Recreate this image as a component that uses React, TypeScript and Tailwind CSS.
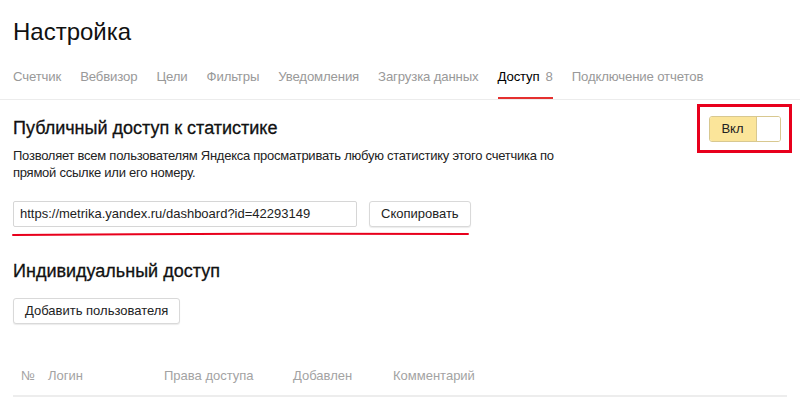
import React from "react";

const tabs = [
  "Счетчик",
  "Вебвизор",
  "Цели",
  "Фильтры",
  "Уведомления",
  "Загрузка данных",
];

const columns = [
  { label: "№", w: "w-[27px]" },
  { label: "Логин", w: "w-[116px]" },
  { label: "Права доступа", w: "w-[129px]" },
  { label: "Добавлен", w: "w-[100px]" },
  { label: "Комментарий", w: "w-[120px]" },
];

export default function App() {
  return (
    <div className="w-[800px] h-[401px] bg-white overflow-hidden text-[#000] font-['Liberation_Sans',Arial,sans-serif]">
      {/* Header */}
      <div className="px-[13px] pt-[17px]">
        <h1 className="text-[24px] leading-[30px] text-[#111]">Настройка</h1>
      </div>

      {/* Tabs */}
      <div className="mt-[19px] border-b border-[#ececec] px-[13px] flex gap-[19px] text-[13.2px] tracking-[-0.15px]">
        {tabs.map((t) => (
          <div key={t} className="h-[33px] pt-[1px] text-[#999]">
            {t}
          </div>
        ))}
        <div className="h-[33px] pt-[1px] border-b-2 border-[#e5302f] -mb-px">
          <span className="text-[#000]">Доступ</span>
          <span className="text-[#999] ml-[6px]">8</span>
        </div>
        <div className="h-[33px] pt-[1px] text-[#999]">Подключение отчетов</div>
      </div>

      {/* Public access */}
      <div className="pl-[13px] pt-[16px] flex justify-between">
        <div>
          <h2 className="text-[18px] leading-[24px] text-[#111] [-webkit-text-stroke:0.3px_#111]">Публичный доступ к статистике</h2>
          <p className="mt-[7px] text-[13px] leading-[17px] text-[#222] w-[560px] tracking-[-0.25px]">
            Позволяет всем пользователям Яндекса просматривать любую статистику этого счетчика по прямой ссылке или его номеру.
          </p>
          <div className="mt-[20px] flex gap-[12px] relative">
            <div className="w-[344px] h-[26px] border border-[#d6d6d6] rounded-[2px] px-[6px] flex items-center text-[13px] text-[#222]">
              https://metrika.yandex.ru/dashboard?id=42293149
            </div>
            <button className="h-[26px] px-[11px] border border-[#d9d9d9] rounded-[3px] shadow-[0_1px_1px_rgba(0,0,0,0.08)] text-[13px] text-[#222] bg-white">
              Скопировать
            </button>
            <svg className="absolute left-[-1px] top-[30px]" width="458" height="6" viewBox="0 0 458 6">
              <path d="M1 4 Q 230 2 456 3" stroke="#e8001c" strokeWidth="2" fill="none" strokeLinecap="round" />
            </svg>
          </div>
        </div>
        <div className="mr-[8px] -mt-[12px]">
          <div className="w-[95px] h-[49px] border-[3px] border-[#e8001c] flex items-center justify-center">
            <div className="w-[72px] h-[26px] flex rounded-[3px] overflow-hidden border border-[#d8c890]">
              <div className="w-[46px] bg-[#fbe59a] flex items-center justify-center text-[13px] text-[#222]">Вкл</div>
              <div className="flex-1 bg-white border-l border-[#d8c890]" />
            </div>
          </div>
        </div>
      </div>

      {/* Individual access */}
      <div className="px-[13px] pt-[32px]">
        <h2 className="text-[18px] leading-[24px] text-[#111] [-webkit-text-stroke:0.3px_#111]">Индивидуальный доступ</h2>
        <button className="mt-[15px] h-[26px] px-[11px] border border-[#d9d9d9] rounded-[3px] shadow-[0_1px_1px_rgba(0,0,0,0.08)] text-[13px] text-[#222] bg-white">
          Добавить пользователя
        </button>
      </div>

      {/* Table header */}
      <div className="mx-[13px] mt-[42px] border-b-2 border-[#ededed] flex pl-[8px] h-[31px] text-[13px] text-[#a3a3a3]">
        {columns.map((c) => (
          <div key={c.label} className={c.w}>
            {c.label}
          </div>
        ))}
      </div>
    </div>
  );
}
